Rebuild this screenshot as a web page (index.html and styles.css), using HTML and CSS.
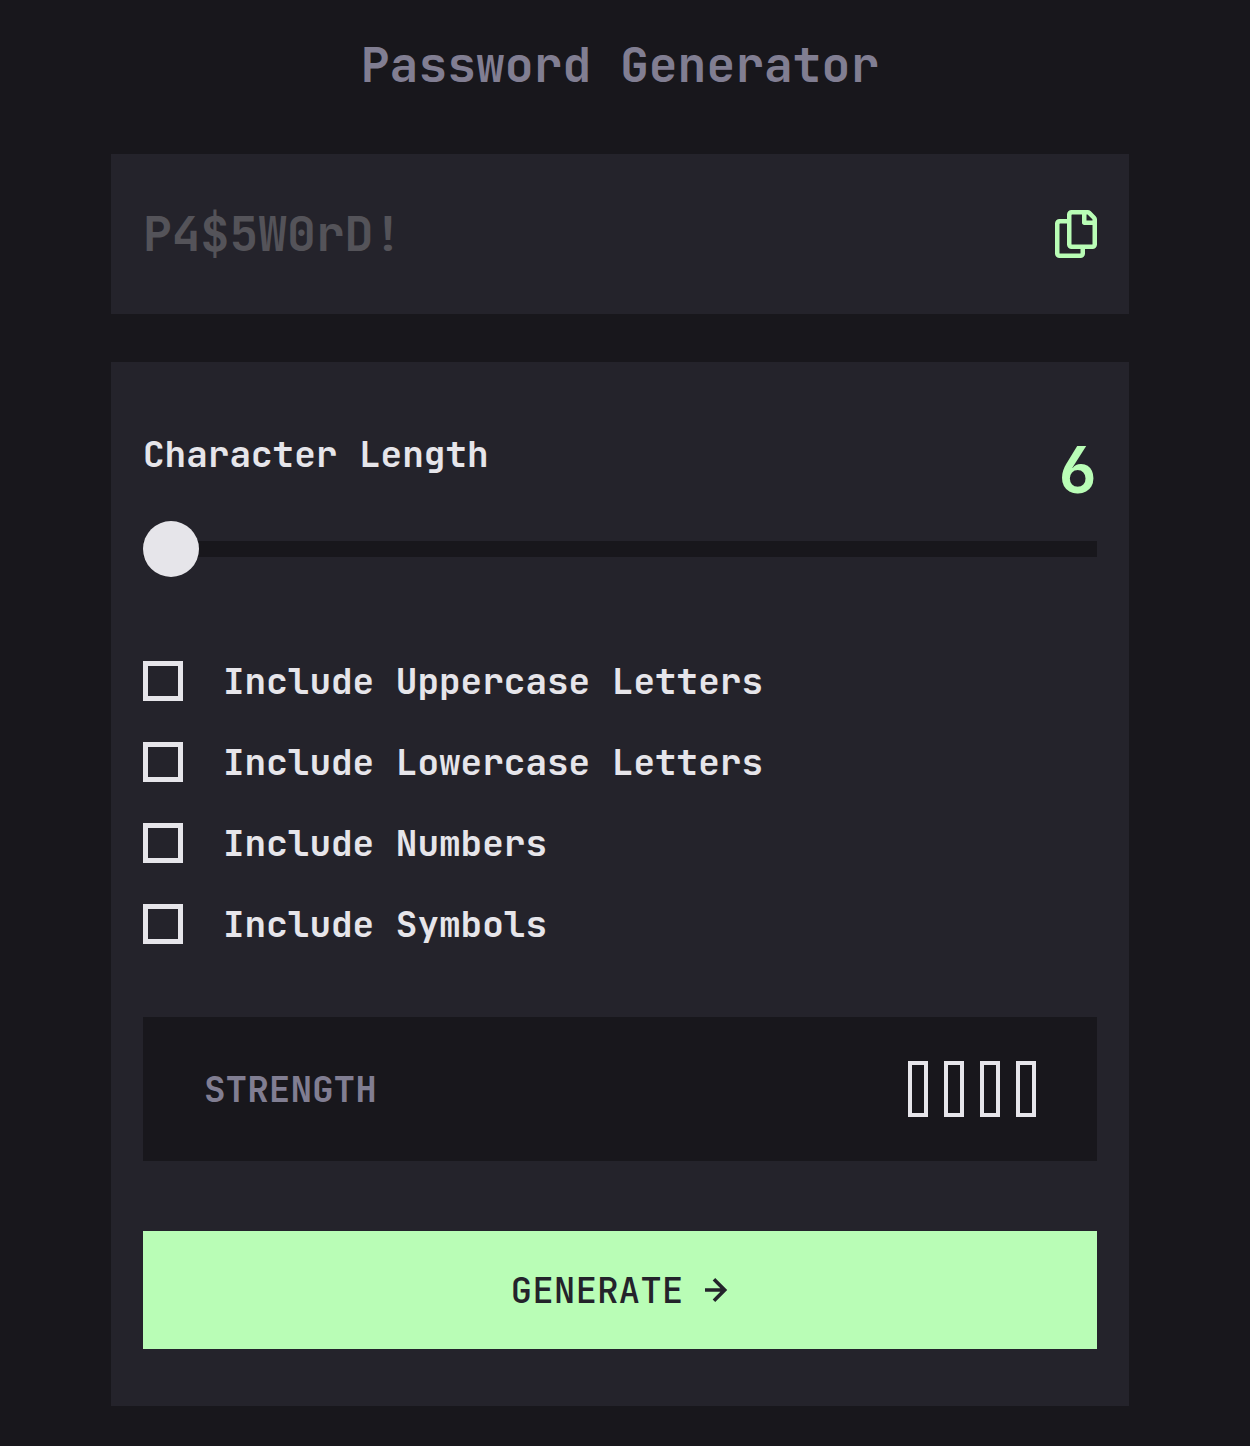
FILE: index.html
```html
<!DOCTYPE html>
<html lang="en">
<head>
  <meta charset="utf-8">
  <meta name="viewport" content="width=device-width, initial-scale=1">
  <title>Password Generator</title>
  <link rel="stylesheet" href="styles.css">
</head>
<body>
  <main class="generator">
    <h1 class="title">Password Generator</h1>

    <div class="output">
      <input class="output-field" type="text" placeholder="P4$5W0rD!" aria-label="Generated password" readonly>
      <button class="copy" type="button" aria-label="Copy password">
        <svg width="42" height="48" viewBox="0 0 21 24" fill="currentColor" aria-hidden="true">
          <path d="M20.341 3.091 17.909.659A2.25 2.25 0 0 0 16.319 0H8.25A2.25 2.25 0 0 0 6 2.25V4.5H2.250A2.25 2.25 0 0 0 0 6.750v15A2.25 2.25 0 0 0 2.250 24h10.500A2.25 2.25 0 0 0 15 21.750V19.500h3.750A2.25 2.25 0 0 0 21 17.250V4.682a2.25 2.25 0 0 0-.659-1.591ZM12.469 21.750H2.530a.281.281 0 0 1-.281-.281V7.030a.281.281 0 0 1 .281-.281H6v10.500a2.25 2.25 0 0 0 2.250 2.250h4.500v1.969a.282.282 0 0 1-.281.281Zm6-4.500H8.530a.281.281 0 0 1-.281-.281V2.530a.281.281 0 0 1 .281-.281H13.500v4.125c0 .621.504 1.125 1.125 1.125h4.125v9.469a.282.282 0 0 1-.281.281Zm.281-12h-3v-3h.451c.075 0 .147.030.2.082L18.667 4.600a.283.283 0 0 1 .082.199v.451Z"/>
        </svg>
      </button>
    </div>

    <form class="settings">
      <div class="length">
        <label class="length-label" for="length">Character Length</label>
        <output class="length-value" for="length">6</output>
      </div>
      <input class="slider" id="length" type="range" min="6" max="20" value="6">

      <div class="options">
        <label class="option"><input class="box" type="checkbox">Include Uppercase Letters</label>
        <label class="option"><input class="box" type="checkbox">Include Lowercase Letters</label>
        <label class="option"><input class="box" type="checkbox">Include Numbers</label>
        <label class="option"><input class="box" type="checkbox">Include Symbols</label>
      </div>

      <div class="strength">
        <span>STRENGTH</span>
        <div class="bars">
          <span class="bar"></span>
          <span class="bar"></span>
          <span class="bar"></span>
          <span class="bar"></span>
        </div>
      </div>

      <button class="generate" type="button">
        GENERATE
        <svg width="24" height="24" viewBox="0 0 12 12" fill="currentColor" aria-hidden="true">
          <path d="m5.106 12 6-6-6-6-1.265 1.265 3.841 3.840H.001v1.790h7.681l-3.841 3.840z"/>
        </svg>
      </button>
    </form>
  </main>
</body>
</html>
```

FILE: styles.css
```css
*,
*::before,
*::after {
  box-sizing: border-box;
}

body {
  margin: 0;
  min-height: 100vh;
  padding: 36px 121px 40px 111px;
  background: #18171c;
  color: #e6e5ea;
  font-family: "JetBrains Mono", "DejaVu Sans Mono", monospace;
  font-size: 36px;
  font-weight: 700;
}

.title {
  margin: 0 0 60px;
  color: #817e92;
  font-size: 48px;
  line-height: 58px;
  text-align: center;
}

.output {
  display: flex;
  align-items: center;
  gap: 32px;
  height: 160px;
  margin-bottom: 48px;
  padding: 0 32px;
  background: #24232b;
}

.output-field {
  flex: 1;
  min-width: 0;
  padding: 0;
  border: 0;
  background: none;
  color: #e6e5ea;
  font: inherit;
  font-size: 48px;
  line-height: 64px;
}

.output-field::placeholder {
  color: #545359;
  opacity: 1;
}

.copy {
  display: flex;
  padding: 0;
  border: 0;
  background: none;
  color: #b9fdb6;
  cursor: pointer;
}

.settings {
  display: flex;
  flex-direction: column;
  padding: 64px 32px 57px;
  background: #24232b;
}

.length {
  display: flex;
  align-items: flex-start;
  justify-content: space-between;
  margin-bottom: 7px;
}

.length-label {
  line-height: 56px;
}

.length-value {
  color: #b9fdb6;
  font-size: 64px;
  line-height: 88px;
}

.slider {
  appearance: none;
  width: 100%;
  height: 56px;
  margin: 0 0 84px;
  background: none;
  cursor: pointer;
}

.slider::-webkit-slider-runnable-track {
  height: 16px;
  background: #18171c;
}

.slider::-webkit-slider-thumb {
  appearance: none;
  width: 56px;
  height: 56px;
  margin-top: -20px;
  border-radius: 50%;
  background: #e6e5ea;
}

.options {
  display: grid;
  gap: 41px;
  margin-bottom: 73px;
}

.option {
  display: flex;
  align-items: center;
  gap: 40px;
  line-height: 40px;
}

.box {
  appearance: none;
  flex: none;
  width: 40px;
  height: 40px;
  margin: 0;
  border: 5px solid #e6e5ea;
}

.box:checked {
  border-color: #b9fdb6;
  background: #b9fdb6;
}

.strength {
  display: flex;
  align-items: center;
  justify-content: space-between;
  height: 144px;
  margin-bottom: 70px;
  padding: 0 61px;
  background: #18171c;
  color: #817e92;
}

.bars {
  display: flex;
  gap: 16px;
}

.bar {
  width: 20px;
  height: 56px;
  border: 4px solid #e6e5ea;
}

.generate {
  display: flex;
  align-items: center;
  justify-content: center;
  gap: 22px;
  height: 118px;
  border: 0;
  background: #b9fdb6;
  color: #24232b;
  font: inherit;
  font-weight: 500;
  cursor: pointer;
}
```
